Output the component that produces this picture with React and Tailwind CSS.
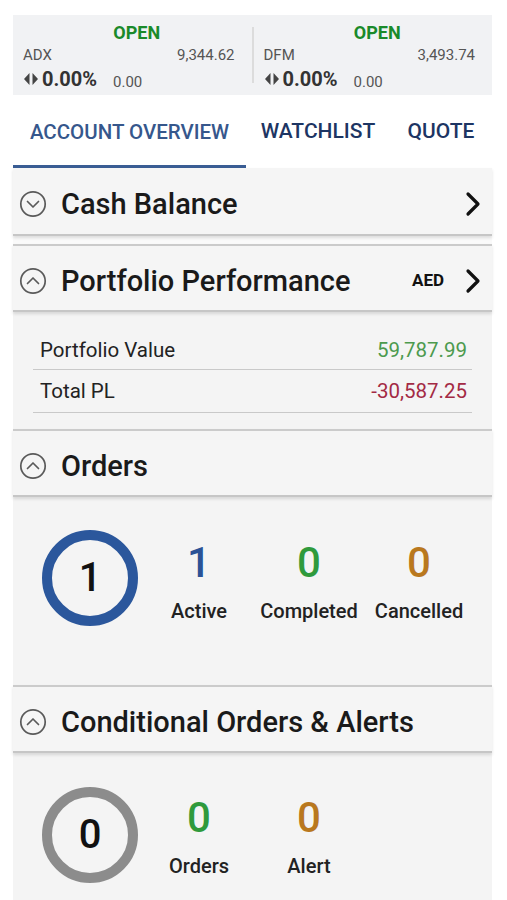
import React from 'react';

const font = { fontFamily: 'Roboto, "Liberation Sans", sans-serif' };

function CircleChevron({ up }) {
  return (
    <svg width="28" height="28" viewBox="0 0 28 28" className="shrink-0">
      <circle cx="14" cy="14" r="12.2" fill="none" stroke="#5a5a5a" strokeWidth="1.7" />
      {up ? (
        <path d="M8.5 16.5 L14 11 L19.5 16.5" fill="none" stroke="#5a5a5a" strokeWidth="1.7" strokeLinecap="round" strokeLinejoin="round" />
      ) : (
        <path d="M8.5 11.5 L14 17 L19.5 11.5" fill="none" stroke="#5a5a5a" strokeWidth="1.7" strokeLinecap="round" strokeLinejoin="round" />
      )}
    </svg>
  );
}

function ChevronRight() {
  return (
    <svg width="18" height="26" viewBox="0 0 18 26">
      <path d="M4 3 L14 13 L4 23" fill="none" stroke="#111" strokeWidth="3.2" strokeLinecap="round" strokeLinejoin="round" />
    </svg>
  );
}

function FlatArrows() {
  return (
    <svg width="16" height="14" viewBox="0 0 16 14" className="mr-[3px]">
      <path d="M6.5 1 L1 7 L6.5 13 Z" fill="#444" />
      <path d="M9.5 1 L15 7 L9.5 13 Z" fill="#444" />
    </svg>
  );
}

function Ticker({ name, value }) {
  return (
    <div className="flex-1 flex flex-col pl-[10px] pr-[17px] pt-[8px]">
      <div className="text-center pl-[16px] text-[18px] font-bold text-[#1a8a2a] leading-[20px]">OPEN</div>
      <div className="flex justify-between text-[15px] text-[#555] leading-[18px] mt-[3px]">
        <span>{name}</span>
        <span>{value}</span>
      </div>
      <div className="flex items-center mt-[3px]">
        <FlatArrows />
        <span className="text-[20px] font-bold text-[#333] leading-[24px]">0.00%</span>
        <span className="text-[15px] text-[#555] ml-[16px] mt-[6px] leading-[18px]">0.00</span>
      </div>
    </div>
  );
}

function SectionHeader({ title, up, right, first }) {
  return (
    <div
      className={`relative z-10 h-[68px] flex items-center bg-[#f5f5f5] pt-[6px] pl-[6px] pr-[10px] border-b-2 border-[#c6c6c6] shadow-[0_2px_3px_rgba(0,0,0,0.12)] ${
        first ? '' : 'border-t-2 border-t-[#cbcbcb]'
      }`}
    >
      <CircleChevron up={up} />
      <span className="ml-[14px] text-[29px] font-medium text-[#1a1a1a] flex-1 mt-[2px]">{title}</span>
      {right}
    </div>
  );
}

function Stat({ value, label, color }) {
  return (
    <div className="w-[110px] flex flex-col items-center">
      <span className={`text-[42px] font-medium leading-[48px] ${color}`}>{value}</span>
      <span className="text-[20px] font-medium text-[#222] leading-[24px] mt-[12px]">{label}</span>
    </div>
  );
}

function Ring({ value, color }) {
  return (
    <div className={`w-[96px] h-[96px] rounded-full border-[10px] ${color} flex items-center justify-center shrink-0`}>
      <span className="text-[40px] font-medium text-[#111]">{value}</span>
    </div>
  );
}

export default function App() {
  return (
    <div className="min-h-[900px] bg-white pt-[15px] px-[13px]" style={font}>
      <div className="w-[479px]">
        <div className="h-[80px] bg-[#f1f2f4] flex items-stretch">
          <Ticker name="ADX" value="9,344.62" />
          <div className="w-[2px] bg-[#dcdcdc] my-[12px]" />
          <Ticker name="DFM" value="3,493.74" />
        </div>

        <div className="h-[73px] flex bg-white">
          <div className="w-[233px] flex items-center justify-center border-b-[3px] border-[#3a5d94]">
            <span className="text-[20.5px] font-medium text-[#36578c] mt-[4px]">ACCOUNT OVERVIEW</span>
          </div>
          <div className="w-[144px] flex items-center justify-center">
            <span className="text-[21px] font-medium text-[#1d3563] mt-[1px]">WATCHLIST</span>
          </div>
          <div className="flex-1 flex items-center justify-center">
            <span className="text-[21px] font-medium text-[#1d3563] mt-[1px]">QUOTE</span>
          </div>
        </div>

        <SectionHeader title="Cash Balance" first right={<ChevronRight />} />
        <div className="h-[8px] bg-[#fafafa]" />

        <SectionHeader
          title="Portfolio Performance"
          up
          right={
            <div className="flex items-center">
              <span className="text-[17px] font-bold text-[#111] mr-[20px]">AED</span>
              <ChevronRight />
            </div>
          }
        />
        <div className="bg-[#f4f4f4] pt-[20px] pb-[16px] px-[20px]">
          <div className="flex justify-between items-center h-[38px] border-b border-[#c9c9c9] pl-[7px] pr-[5px] text-[20.5px]">
            <span className="text-[#222]">Portfolio Value</span>
            <span className="text-[#4c9a4e]">59,787.99</span>
          </div>
          <div className="flex justify-between items-center h-[43px] border-b border-[#c9c9c9] pl-[7px] pr-[5px] text-[20.5px]">
            <span className="text-[#222]">Total PL</span>
            <span className="text-[#a32a44]">-30,587.25</span>
          </div>
        </div>

        <SectionHeader title="Orders" up />
        <div className="bg-[#f4f4f4] h-[188px] flex items-start pt-[33px] pl-[29px]">
          <Ring value="1" color="border-[#2b579c]" />
          <div className="flex ml-[6px] mt-[9px]">
            <Stat value="1" label="Active" color="text-[#2b5296]" />
            <Stat value="0" label="Completed" color="text-[#2f9a3c]" />
            <Stat value="0" label="Cancelled" color="text-[#b9781e]" />
          </div>
        </div>

        <SectionHeader title="Conditional Orders & Alerts" up />
        <div className="bg-[#f4f4f4] h-[147px] flex items-start pt-[34px] pl-[29px]">
          <Ring value="0" color="border-[#8c8c8c]" />
          <div className="flex ml-[6px] mt-[7px]">
            <Stat value="0" label="Orders" color="text-[#2f9a3c]" />
            <Stat value="0" label="Alert" color="text-[#b9781e]" />
          </div>
        </div>
      </div>
    </div>
  );
}
